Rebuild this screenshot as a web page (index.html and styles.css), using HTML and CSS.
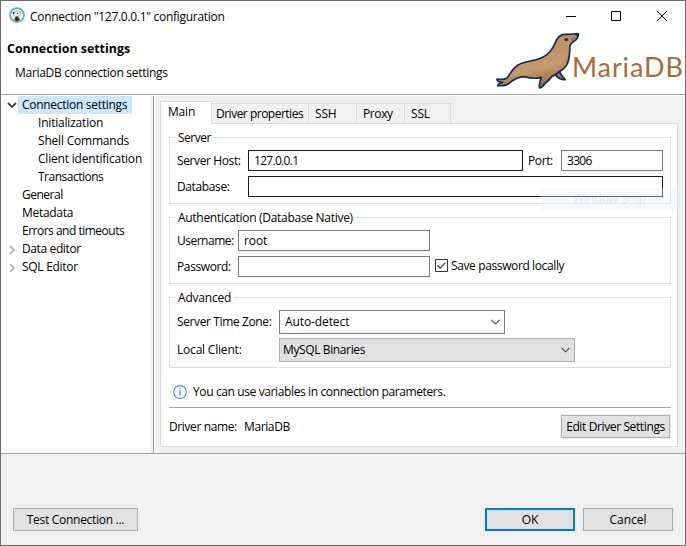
FILE: index.html
```html
<!DOCTYPE html>
<html lang="en">
<head>
<meta charset="utf-8">
<title>Connection "127.0.0.1" configuration</title>
<link rel="stylesheet" href="styles.css">
</head>
<body>
<div class="window">
  <header class="head">
    <div class="headings">
      <div class="titlebar">
        <svg class="app-icon" width="16" height="16" viewBox="0 0 16 16"><circle cx="8" cy="8" r="6.900" fill="#fff" stroke="#58b4bd" stroke-width="1.900"/><path d="M3.400 5.200 5 3.500h5.500l2 1.700-.7 3.600-1.600 1.400.8 2.700-2 1H6l-1-1.400.8-2.700-2-1z" fill="#c9c2be"/><path d="M5 5h3l1-1 2 2-1 3H6L4.500 7z" fill="#eee"/><path d="m6.500 10 2-.8 2.400 3.800-3 1.300-2.400-1z" fill="#34231f"/><path d="M4 5h1.500v2H4zM8 6h1v1H8z" fill="#40322d"/></svg>
        <span class="caption fit-m">Connection "127.0.0.1" configuration</span>
      </div>
      <h1>Connection settings</h1>
      <p class="subtitle fit-m">MariaDB connection settings</p>
    </div>
    <div class="brandside">
      <div class="controls">
        <svg width="103" height="12" viewBox="0 0 103 12" fill="none" stroke="#000"><path d="M0 6.500h10"/><path d="M45.500 1.500h9v9h-9z"/><path d="m91.200 1.200 9.600 9.600m0-9.600-9.600 9.600"/></svg>
      </div>
      <div class="brand">
        <svg class="seal" width="88" height="58" viewBox="18 12 264 174">
          <defs><linearGradient id="fur" x1=".35" y1=".2" x2=".6" y2="1"><stop offset="0" stop-color="#bd9163"/><stop offset=".55" stop-color="#c59a6c"/><stop offset="1" stop-color="#8f6138"/></linearGradient></defs>
          <path d="M205 115C207 132 212 142 226 155C213 157 202 150 194 137Z" fill="#a3744a" stroke="#0b2a63" stroke-width="5" stroke-linejoin="round"/>
          <path d="M21 153C33 155 43 155 51 150C61 137 68 122 84 111C104 99 133 99 152 91C179 79 188 62 196 44C202 27 213 18 227 19C240 20 252 17 265 17C266 23 263 28 260 33C253 41 243 42 240 53C238 67 241 86 233 104C229 116 217 126 206 132C200 139 191 142 185 146C179 155 173 160 165 166C161 173 157 179 149 180C145 174 150 164 153 148C136 153 121 151 103 146C83 147 69 156 57 166C47 175 34 173 23 173C24 166 30 165 38 163C29 162 20 160 21 153Z" fill="url(#fur)" stroke="#0b2a63" stroke-width="5" stroke-linejoin="round"/>
          <path d="M160 148c4-8 9-13 15-17M232 86c-5 18-15 28-27 34" fill="none" stroke="#8b5d36" stroke-width="3" opacity=".4"/>
          <path d="m243 30 12-5 4 3-8 8-10 2z" fill="#8a7a70"/><ellipse cx="229" cy="35" rx="6" ry="4" fill="#0b2a63"/><path d="m254 18 11-1-3 10z" fill="#0b2a63"/>
        </svg>
        <span class="wordmark">MariaDB</span>
      </div>
    </div>
  </header>
  <main class="body">
    <nav class="tree">
      <div class="node"><svg class="arrow" width="10" height="7" viewBox="0 0 10 7"><path d="m1 1 4 4 4-4" fill="none" stroke="#404040" stroke-width="1.800"/></svg><span class="selected fit-m">Connection settings</span></div>
      <div class="node child"><span class="fit-s">Initialization</span></div>
      <div class="node child"><span class="fit-s">Shell Commands</span></div>
      <div class="node child"><span class="fit-s">Client identification</span></div>
      <div class="node child"><span class="fit-xl">Transactions</span></div>
      <div class="node top"><span class="fit-xl">General</span></div>
      <div class="node top"><span class="fit-m">Metadata</span></div>
      <div class="node top"><span class="fit-xl">Errors and timeouts</span></div>
      <div class="node"><svg class="arrow closed" width="7" height="10" viewBox="0 0 7 10"><path d="m1 1 4 4-4 4" fill="none" stroke="#a6a6a6" stroke-width="1.600"/></svg><span class="label fit-l">Data editor</span></div>
      <div class="node"><svg class="arrow closed" width="7" height="10" viewBox="0 0 7 10"><path d="m1 1 4 4-4 4" fill="none" stroke="#a6a6a6" stroke-width="1.600"/></svg><span class="label fit-m">SQL Editor</span></div>
    </nav>
    <section class="content">
      <div class="tabs">
        <div class="tab active"><span class="fit-s">Main</span></div>
        <div class="tab tab-driver"><span class="fit-xl">Driver properties</span></div>
        <div class="tab tab-mid"><span class="fit-s">SSH</span></div>
        <div class="tab tab-mid"><span class="fit-l">Proxy</span></div>
        <div class="tab tab-last"><span class="fit-s">SSL</span></div>
      </div>
      <div class="panel">
        <section class="group server">
          <h2><span class="fit-xl">Server</span></h2>
          <div class="row host">
            <label class="fit-l">Server Host:</label><div class="field strong fit-xxl">127.0.0.1</div>
            <label class="port fit-l">Port:</label><div class="field fit-xxl">3306</div>
          </div>
          <div class="row database"><label class="fit-l">Database:</label><div class="field strong"></div></div>
        </section>
        <section class="group auth">
          <h2><span class="fit-m">Authentication (Database Native)</span></h2>
          <div class="row cred"><label class="fit-xl">Username:</label><div class="field fit-xs">root</div></div>
          <div class="row cred"><label class="fit-l">Password:</label><div class="field"></div>
            <div class="check"><svg width="13" height="13" viewBox="0 0 13 13"><path d="M.5.5h12v12H.5z" fill="#fff" stroke="#333"/><path d="m2.500 6.500 2.700 2.700 5.300-5.600" fill="none" stroke="#333" stroke-width="1.200"/></svg><span class="fit-l">Save password locally</span></div>
          </div>
        </section>
        <section class="group advanced">
          <h2><span class="fit-s">Advanced</span></h2>
          <div class="row zone"><label class="fit-l">Server Time Zone:</label><div class="combo"><span class="fit-xs">Auto-detect</span><svg width="9" height="6" viewBox="0 0 9 6"><path d="m.5.800 4 4 4-4" fill="none" stroke="#444" stroke-width="1.100"/></svg></div></div>
          <div class="row client"><label class="fit-s">Local Client:</label><div class="combo flat"><span class="fit-l">MySQL Binaries</span><svg width="9" height="6" viewBox="0 0 9 6"><path d="m.5.800 4 4 4-4" fill="none" stroke="#444" stroke-width="1.100"/></svg></div></div>
        </section>
        <div class="hint"><svg width="14" height="14" viewBox="0 0 14 14"><circle cx="7" cy="7" r="6.400" fill="#fff" stroke="#3f93cf" stroke-width="1.100"/><path d="M7 5.500v5M7 3v1.400" stroke="#3f93cf" stroke-width="1.300"/></svg><span class="fit-l">You can use variables in connection parameters.</span></div>
        <div class="driver"><span class="driver-label fit-l">Driver name:</span><span class="fit-l">MariaDB</span><button class="btn edit fit-l">Edit Driver Settings</button></div>
      </div>
    </section>
  </main>
  <footer class="foot">
    <button class="btn test fit-m">Test Connection ...</button>
    <button class="btn ok">OK</button>
    <button class="btn cancel">Cancel</button>
  </footer>
  <div class="ghost">Window Snip</div>
</div>
</body>
</html>
```
FILE: styles.css
```css
* { box-sizing: border-box; }
body { margin: 0; font: 12px/18px "Open Sans", "Noto Sans", sans-serif; color: #000; }
h1, h2, p { margin: 0; font-size: 12px; font-weight: 400; }

/* Tracking steps for compact dialog text */
.fit-xs { letter-spacing: -.1px; }
.fit-s { letter-spacing: -.2px; }
.fit-m { letter-spacing: -.29px; }
.fit-l { letter-spacing: -.38px; }
.fit-xl { letter-spacing: -.5px; }
.fit-xxl { letter-spacing: -.7px; }

.window { position: relative; width: 686px; height: 546px; border: 1px solid #6d6d6d; background: #f0f0f0; display: flex; flex-direction: column; overflow: hidden; white-space: nowrap; }
.head { height: 94px; flex: none; background: #fff; border-bottom: 1px solid #a0a0a0; display: flex; justify-content: space-between; }
.titlebar { display: flex; padding: 6px 0 0 8px; height: 30px; }
.caption { margin-left: 5px; line-height: 19px; }
h1 { font-weight: 700; padding-left: 6px; margin-top: 8px; font-size: 12.400px; line-height: 20px; height: 18px; }
.subtitle { padding-left: 14px; margin-top: 6px; line-height: 19px; }
.controls { height: 27px; padding: 8px 0 0 70px; }
.brandside { width: 189px; }
.brand { display: flex; align-items: flex-start; padding-top: 4px; height: 62px; }
.seal { flex: none; }
.wordmark { font: 27px/30px Lato, sans-serif; letter-spacing: .9px; color: #a66b37; margin: 20px 0 0 -12px; }

.body { height: 359px; flex: none; display: flex; border-top: 1px solid #fff; border-bottom: 1px solid #a0a0a0; }
.tree { width: 149px; background: #fff; margin-right: 3px; flex: none; }
.node { height: 18px; display: flex; align-items: center; }
.node span { height: 18px; line-height: 18px; }
.arrow { margin: 0 0 0 6px; width: 10px; }
.arrow.closed { width: 7px; margin: 2px 0 0 8px; }
.selected { background: #cce8ff; padding: 0 4px; margin-left: 1px; width: 114px; }
.label { margin-left: 6px; }
.child { padding-left: 37px; }
.top { padding-left: 21px; }

.content { flex: 1; border-left: 1px solid #a0a0a0; box-shadow: inset 1px 0 #fff; padding: 5px 7px 6px 6px; display: flex; flex-direction: column; }
.tabs { display: flex; align-items: flex-end; height: 23px; position: relative; z-index: 1; margin-bottom: -1px; }
.tab { height: 21px; border: 1px solid #d9d9d9; border-left: 0; padding-left: 4px; line-height: 20px; background: #f0f0f0; }
.tab.active { height: 23px; width: 52px; border: 1px solid #d9d9d9; border-bottom: 0; background: #fff; padding-left: 7px; }
.tab-driver { width: 97px; }
.tab-mid { width: 48px; padding-left: 6px; }
.tab-last { width: 46px; padding-left: 6px; }
.panel { flex: 1; border: 1px solid #d9d9d9; background: #fff; padding: 13px 6px 0 8px; }

.group { border: 1px solid #dcdcdc; padding: 0 7px; }
.group h2 { width: fit-content; height: 18px; line-height: 18px; margin: -9px 0 3px -1px; background: #fff; padding: 0 2px; }
.server, .auth { height: 67px; margin-bottom: 13px; }
.advanced { height: 71px; }
.row { display: grid; height: 21px; margin-bottom: 5px; }
.row label { line-height: 21px; }
.host { grid-template-columns: 71px 275px 38px 102px; }
.port { padding-left: 5px; }
.database { grid-template-columns: 71px 415px; }
.cred { grid-template-columns: 61px 192px 1fr; }
.field { border: 1px solid #7a7a7a; background: #fff; padding-left: 5px; line-height: 19px; }
.field.strong { border-color: #1a1a1a; }
.check { display: flex; align-items: center; padding-left: 5px; gap: 3px; height: 19px; }
.zone { grid-template-columns: 102px 226px; height: 23px; }
.client { grid-template-columns: 102px 296px; height: 23px; }
.zone label, .client label { line-height: 24px; }
.combo { border: 1px solid #7a7a7a; display: flex; justify-content: space-between; align-items: center; padding: 0 4px 0 5px; background: #fff; }
.combo.flat { background: #e1e1e1; border-color: #adadad; padding-left: 3px; }

.hint { display: flex; align-items: center; height: 40px; padding: 8px 0 0 4px; gap: 6px; border-bottom: 1px solid #a0a0a0; margin-bottom: 7px; }
.driver { display: flex; align-items: center; height: 23px; padding-right: 1px; }
.driver-label { width: 75px; }
.btn { font: inherit; color: #000; height: 23px; background: #e1e1e1; border: 1px solid #adadad; padding: 0; text-align: center; line-height: 20px; }
.btn.fit-l { letter-spacing: -.38px; }
.edit { width: 109px; margin-left: auto; box-shadow: 0 0 0 1px #f0f0f0; }

.foot { border-top: 1px solid #fff; padding: 53px 12px 0; display: flex; flex: 1; }
.test { width: 125px; }
.ok { width: 90px; border: 2px solid #0078d7; margin-left: auto; line-height: 18px; }
.cancel { width: 90px; margin-left: 8px; }
.ghost { position: absolute; left: 540px; top: 187px; width: 144px; height: 22px; background: rgba(225, 241, 252, .35); color: rgba(110, 80, 80, .13); padding-left: 32px; line-height: 22px; }
```
